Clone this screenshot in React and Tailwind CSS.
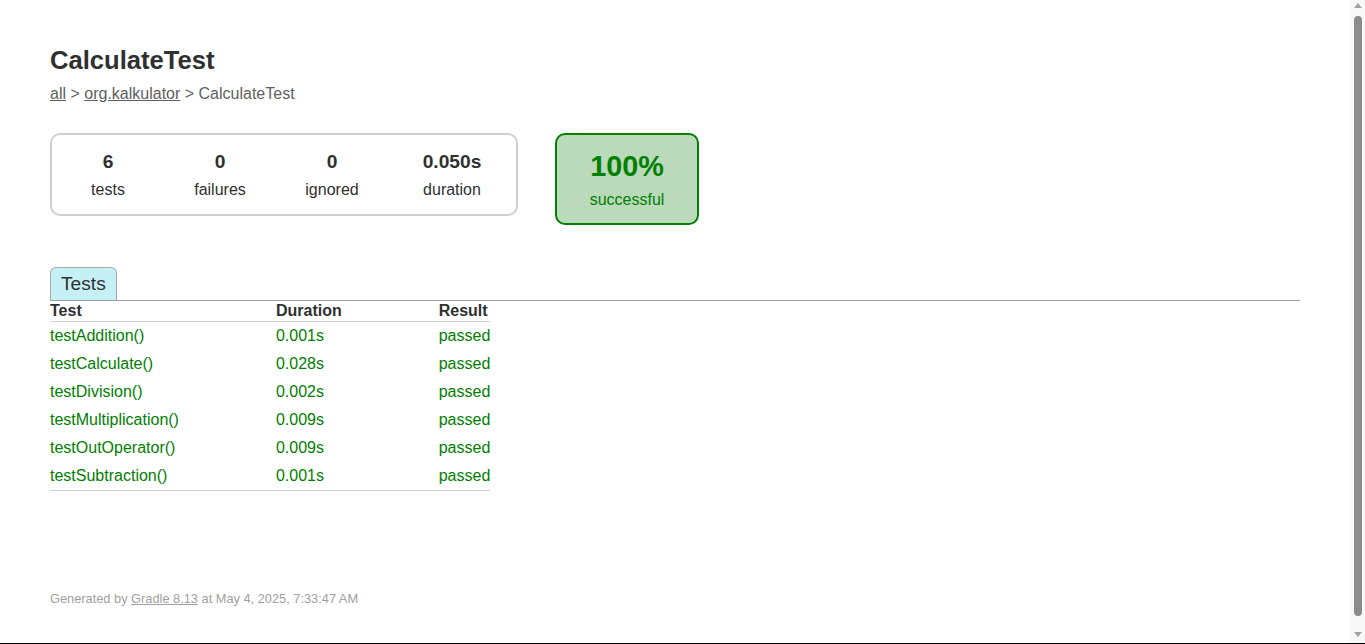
const tests = [
  { name: 'testAddition()', duration: '0.001s' },
  { name: 'testCalculate()', duration: '0.028s' },
  { name: 'testDivision()', duration: '0.002s' },
  { name: 'testMultiplication()', duration: '0.009s' },
  { name: 'testOutOperator()', duration: '0.009s' },
  { name: 'testSubtraction()', duration: '0.001s' },
];

const counters = [
  { value: '6', label: 'tests', width: 'w-[112px]' },
  { value: '0', label: 'failures', width: 'w-[112px]' },
  { value: '0', label: 'ignored', width: 'w-[112px]' },
  { value: '0.050s', label: 'duration', width: 'w-[128px]' },
];

function Scrollbar() {
  return (
    <div className="flex w-[15px] shrink-0 flex-col items-center bg-[#f8f8f8] pt-[3px]">
      <div className="h-0 w-0 border-x-[4px] border-b-[5px] border-x-transparent border-b-[#a3a3a3]" />
      <div className="mt-[8px] h-[600px] w-[8px] rounded-full bg-[#8b8b8b]" />
      <div className="mt-[16px] h-0 w-0 border-x-[4px] border-t-[5px] border-x-transparent border-t-[#a3a3a3]" />
    </div>
  );
}

export default function App() {
  return (
    <div className="flex h-[644px] flex-col overflow-hidden bg-white font-['Liberation_Sans',Arial,sans-serif] text-[16px] text-[#303030]">
      <div className="flex min-h-0 flex-1">
        <main className="min-w-0 flex-1 px-[50px] pt-[46px]">
          <h1 className="whitespace-nowrap text-[25.6px] font-bold leading-[29px]">CalculateTest</h1>
          <div className="mt-[10px] leading-[18px] text-[#606060]">
            <a href="#" className="underline">all</a> &gt;{' '}
            <a href="#" className="underline">org.kalkulator</a> &gt; CalculateTest
          </div>

          <div className="mt-[30px] flex items-start">
            <div className="flex rounded-[10px] border-2 border-[#d0d0d0] pb-[15px] pt-[16px]">
              {counters.map((c) => (
                <div key={c.label} className={`${c.width} text-center`}>
                  <div className="mb-[8px] text-[19.2px] font-bold leading-[22px]">{c.value}</div>
                  <div className="leading-[18px]">{c.label}</div>
                </div>
              ))}
            </div>
            <div className="ml-[37px] w-[144px] rounded-[10px] border-2 border-[#008000] bg-[#bbd9bb] pb-[14px] pt-[15px] text-center text-[#008000]">
              <div className="mb-[8px] text-[28.8px] font-bold leading-[33px]">100%</div>
              <div className="leading-[18px]">successful</div>
            </div>
          </div>

          <div className="mt-[42px] flex border-b border-[#a0a0a0]">
            <div className="rounded-t-[6px] border border-b-0 border-[#a8a8a8] bg-[#c5f0f5] px-[10px] text-[19.2px] leading-[32px]">
              Tests
            </div>
          </div>

          <table className="border-collapse border-b border-[#d0d0d0]">
            <thead>
              <tr>
                <th className="border-b border-[#d0d0d0] py-px text-left leading-[18px]">Test</th>
                <th className="border-b border-[#d0d0d0] py-px pl-[97px] text-left leading-[18px]">Duration</th>
                <th className="border-b border-[#d0d0d0] py-px pl-[97px] text-left leading-[18px]">Result</th>
              </tr>
            </thead>
            <tbody className="text-[#008000]">
              {tests.map((t) => (
                <tr key={t.name}>
                  <td className="whitespace-nowrap py-[5px] leading-[18px]">{t.name}</td>
                  <td className="whitespace-nowrap py-[5px] pl-[97px] leading-[18px]">{t.duration}</td>
                  <td className="whitespace-nowrap py-[5px] pl-[97px] leading-[18px]">passed</td>
                </tr>
              ))}
            </tbody>
          </table>

          <div className="mt-[100px] whitespace-nowrap text-[12.8px] leading-[15px] text-[#a0a0a0]">
            Generated by <a href="#" className="underline">Gradle 8.13</a> at May 4, 2025, 7:33:47 AM
          </div>
        </main>
        <Scrollbar />
      </div>
      <div className="h-px shrink-0 bg-black" />
    </div>
  );
}
